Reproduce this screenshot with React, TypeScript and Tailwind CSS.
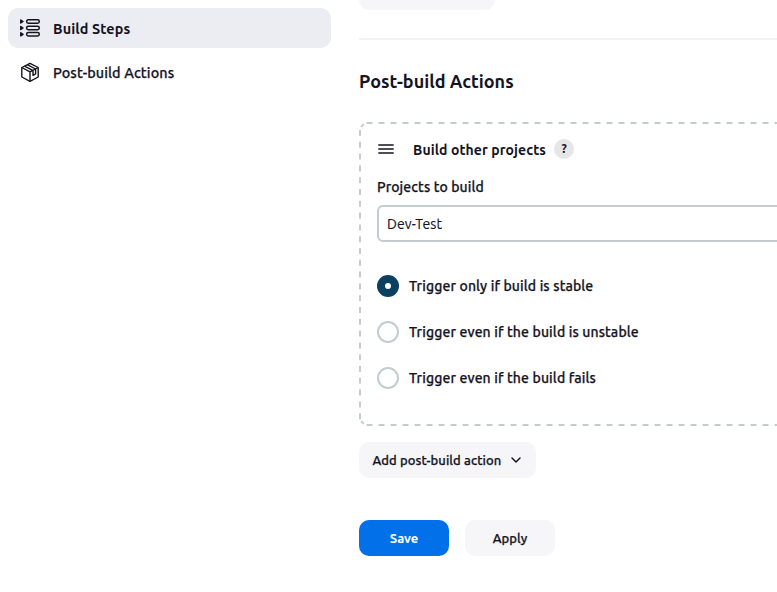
import React from "react";

function StepsIcon() {
  return (
    <svg width="22" height="22" viewBox="0 0 22 22" fill="none" stroke="#14141f" strokeWidth="1.5" className="shrink-0">
      {[4.5, 11, 17.3].map((y) => (
        <g key={y}>
          <rect x="7.6" y={y - 1.7} width="12.7" height="3.4" rx="1.7" />
          <path d={`M1.8 ${y - 1.5}L4 ${y}L1.8 ${y + 1.5}Z`} fill="#14141f" strokeLinejoin="round" />
        </g>
      ))}
    </svg>
  );
}

function PackageIcon() {
  return (
    <svg width="22" height="22" viewBox="0 0 22 22" fill="none" stroke="#14141f" strokeWidth="1.4" strokeLinejoin="round" className="shrink-0">
      <path d="M11 2.3L19.2 6.5V16L11 20.3L2.8 16V6.5Z" />
      <path d="M2.8 6.5L11 10.9L19.2 6.5M11 10.9V20.3M5.5 5.1L13.7 9.4M8.2 3.7L16.5 8M14 9.4V14.4L16.6 13V8" />
    </svg>
  );
}

function Radio({ label, checked = false }: { label: string; checked?: boolean }) {
  return (
    <label className="flex h-[22px] items-center gap-2.5">
      <span className={checked ? "flex size-[22px] items-center justify-center rounded-full bg-[#0b4060]" : "size-[22px] rounded-full border-2 border-[#c3cccf]"}>
        {checked && <span className="size-1.5 rounded-full bg-white" />}
      </span>
      <span className="text-[14px] leading-[22px] font-medium tracking-[0.13px] [-webkit-text-stroke:0.25px]">{label}</span>
    </label>
  );
}

export default function App() {
  return (
    <div className="flex h-[592px] w-[777px] overflow-hidden bg-white font-['Ubuntu','Noto_Sans',sans-serif] whitespace-nowrap text-[#14141f]">
      <nav className="ml-2 w-[323px] shrink-0 pt-2">
        <a className="flex h-10 items-center gap-3 rounded-[10px] bg-[#ecedf3] pl-[11px]">
          <StepsIcon />
          <span className="pt-[3px] text-[14.4px] font-bold tracking-[0.1px]">Build Steps</span>
        </a>
        <a className="mt-1 flex h-10 items-center gap-3 pl-[11px]">
          <PackageIcon />
          <span className="pt-[3px] text-[14.4px] font-medium tracking-[0.1px] [-webkit-text-stroke:0.25px]">Post-build Actions</span>
        </a>
      </nav>
      <main className="ml-7 w-[560px] shrink-0">
        <div className="h-2.5 w-[136px] rounded-b-[10px] bg-[#f6f6f9]" />
        <div className="mt-7 h-0.5 bg-[#f2f2f8]" />
        <h2 className="mt-[27px] h-7 text-[18px] leading-7 font-bold">Post-build Actions</h2>
        <section className="relative mt-[27px] h-[304px] px-[18px] pt-[17px]">
          <svg className="absolute inset-0" width="560" height="304" fill="none" stroke="#c3cccf" strokeWidth="2">
            <path d="M7.5 1H560M7.5 303H560" strokeDasharray="6 6" />
            <path d="M1 8V298" strokeDasharray="6 5.8" />
            <path d="M2.3 5Q3.2 3.2 5 2.3M2.3 299Q3.2 300.8 5 301.7" />
          </svg>
          <div className="flex h-5 items-center">
            <svg width="18" height="12" viewBox="0 0 18 12" stroke="#14141f" strokeWidth="1.4">
              <path d="M1.3 2H16.7M1.3 6H16.7M1.3 10H16.7" />
            </svg>
            <span className="ml-[18px] pt-0.5 text-[14px] leading-5 font-bold tracking-[0.1px]">Build other projects</span>
            <span className="ml-2 flex size-5 items-center justify-center rounded-full bg-[#e6e6e6] text-[12px] leading-5 font-bold">?</span>
          </div>
          <label className="mt-[18px] block h-5 text-[14px] leading-5 font-medium tracking-[0.1px] [-webkit-text-stroke:0.25px]">Projects to build</label>
          <div className="mt-2 flex h-[37px] items-center rounded-[6px] border-2 border-[#c3cccf] pt-0.5 pl-2 text-[14px] tracking-[0.1px] [-webkit-text-stroke:0.15px]">Dev-Test</div>
          <div className="mt-[33px] flex flex-col gap-6">
            <Radio label="Trigger only if build is stable" checked />
            <Radio label="Trigger even if the build is unstable" />
            <Radio label="Trigger even if the build fails" />
          </div>
        </section>
        <button className="mt-4 flex h-9 w-[177px] items-center justify-between rounded-[10px] bg-[#f6f6f9] pr-[14px] pl-[13.5px] text-[13px] font-medium tracking-[0.08px] [-webkit-text-stroke:0.25px]">
          <span className="pt-0.5">Add post-build action</span>
          <svg width="12" height="8" viewBox="0 0 12 8" fill="none" stroke="#14141f" strokeWidth="1.5" strokeLinecap="round" strokeLinejoin="round">
            <path d="M2 2L6 6L10 2" />
          </svg>
        </button>
        <div className="mt-[42px] flex gap-4">
          <button className="h-9 w-[90px] rounded-[10px] bg-[#0270e8] pt-0.5 text-[13px] font-semibold text-white">Save</button>
          <button className="h-9 w-[90px] rounded-[10px] bg-[#f6f6f9] pt-0.5 text-[13px] font-medium tracking-[0.1px] [-webkit-text-stroke:0.25px]">Apply</button>
        </div>
      </main>
    </div>
  );
}
